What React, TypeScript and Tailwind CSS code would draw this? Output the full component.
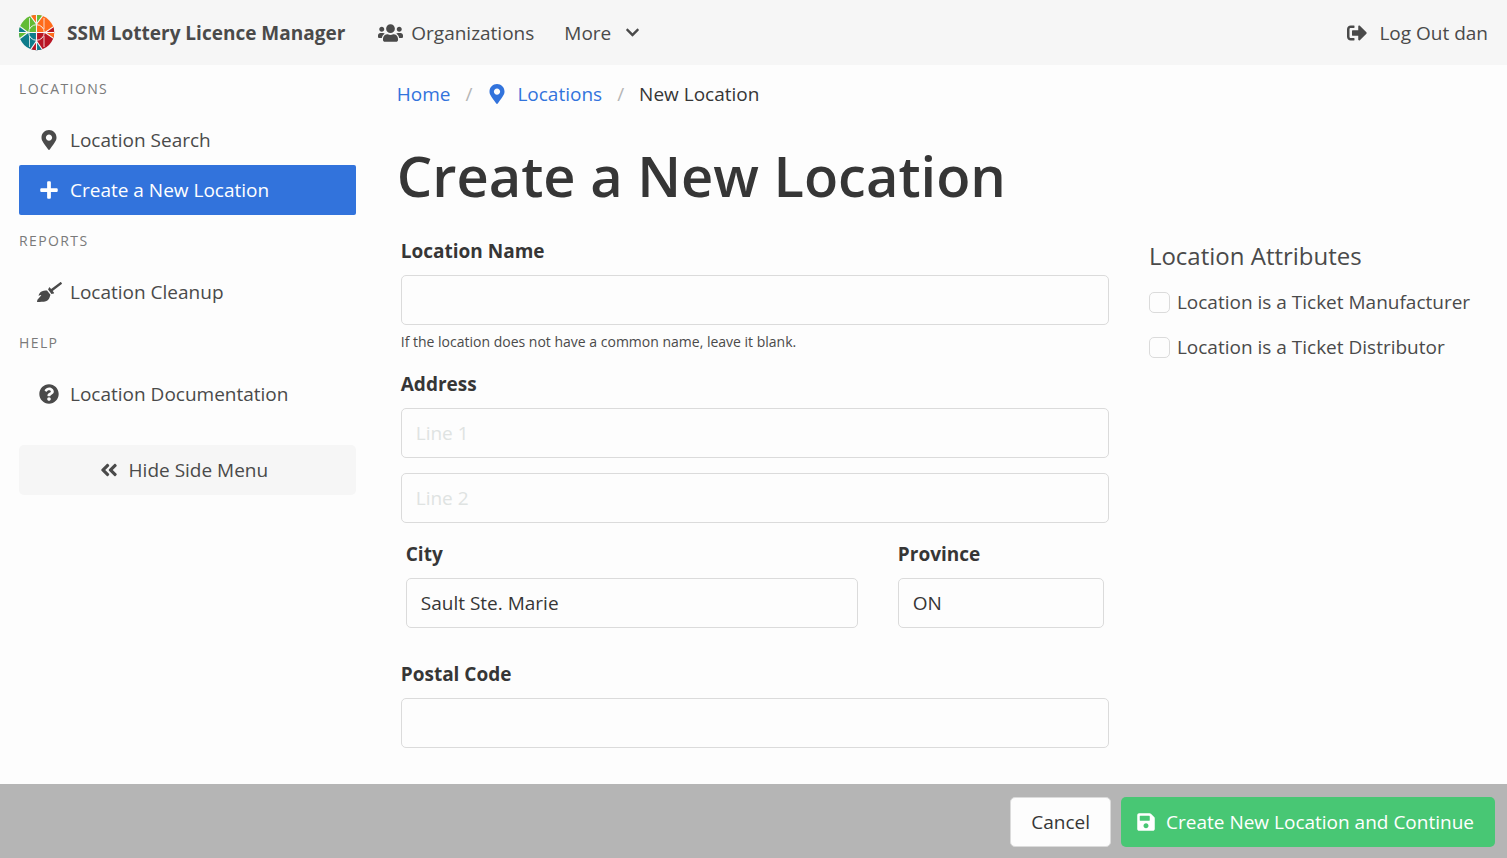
import React, { useState } from "react";
import type { ComponentType, InputHTMLAttributes } from "react";
import {
  FaAngleDoubleLeft,
  FaBroom,
  FaChevronDown,
  FaMapMarkerAlt,
  FaPlus,
  FaQuestionCircle,
  FaSave,
  FaSignOutAlt,
  FaUsers,
} from "react-icons/fa";

type Icon = ComponentType<{ className?: string }>;

function Logo() {
  return (
    <svg viewBox="0 0 36 36" className="size-9 shrink-0" aria-hidden="true">
      <defs>
        <clipPath id="logo-disc">
          <circle cx="17.6" cy="17.6" r="17.6" />
        </clipPath>
      </defs>
      <g clipPath="url(#logo-disc)">
        <rect width="18" height="18" fill="#62bb35" />
        <rect x="18" width="18" height="18" fill="#ff6b1a" />
        <rect y="18" width="18" height="18" fill="#0e7c8b" />
        <rect x="18" y="18" width="18" height="18" fill="#b91524" />
        <path d="M17.5 9 10-1H17.5z" fill="#ff6b1a" />
        <path d="M17.5 9 25-1H17.5z" fill="#62bb35" />
        <path d="M9 17.5-1 10V17.5z" fill="#0e7c8b" />
        <path d="M9 17.5-1 25V17.5z" fill="#62bb35" />
        <path d="M26 17.5 37 10V17.5z" fill="#b91524" />
        <path d="M26 17.5 37 25V17.5z" fill="#ff6b1a" />
        <path d="M17.5 26 10 37H17.5z" fill="#b91524" />
        <path d="M17.5 26 25 37H17.5z" fill="#0e7c8b" />
        <g stroke="#f7f7f7" strokeWidth="1.1" fill="none">
          <path d="M17.5 0v36M0 17.5h36" />
          <path d="M10-1 17.5 9 25-1M10 37 17.5 26 25 37" />
          <path d="M-1 10 9 17.5-1 25M37 10 26 17.5 37 25" />
          <path d="M10.5 3v11M25 3v11M10.5 32V21M25 32V21" strokeWidth="0.8" />
          <circle cx="17.5" cy="17.5" r="7.8" strokeWidth="0.9" />
        </g>
      </g>
    </svg>
  );
}

function MenuSection({ title, children }: { title: string; children: React.ReactNode }) {
  return (
    <section>
      <h2 className="mb-3.5 text-[14px] leading-6 tracking-widest text-[#7a7a7a] uppercase">{title}</h2>
      <ul>{children}</ul>
    </section>
  );
}

function MenuItem({ icon: ItemIcon, iconClass, label, active }: { icon: Icon; iconClass: string; label: string; active?: boolean }) {
  return (
    <li>
      <a
        href="#"
        aria-current={active ? "page" : undefined}
        className={
          active
            ? "flex h-[50px] items-center gap-1.5 rounded-xs bg-[#3273dc] px-[15px] text-white"
            : "flex h-[50px] items-center gap-1.5 rounded-xs px-[15px] text-[#4a4a4a]"
        }
      >
        <span className="flex w-[30px] shrink-0 justify-center">
          <ItemIcon className={iconClass} />
        </span>
        {label}
      </a>
    </li>
  );
}

const inputClass =
  "block h-[50px] w-full rounded-[5px] border border-[#dbdbdb] bg-[#fdfdfd] px-3.5 text-[#363636] placeholder:text-[#dfe3e2]";
const labelClass = "mb-[9px] block font-bold text-[#363636]";

function Field({ id, label, ...props }: { id: string; label: string } & InputHTMLAttributes<HTMLInputElement>) {
  return (
    <div>
      <label htmlFor={id} className={labelClass}>
        {label}
      </label>
      <input id={id} type="text" className={inputClass} {...props} />
    </div>
  );
}

function Check({ id, label }: { id: string; label: string }) {
  return (
    <div className="flex items-center gap-[7px]">
      <input
        id={id}
        type="checkbox"
        className="size-[21px] shrink-0 appearance-none rounded-[5px] border border-[#dbdbdb] checked:bg-[#3273dc]"
      />
      <label htmlFor={id} className="whitespace-nowrap">
        {label}
      </label>
    </div>
  );
}

export default function App() {
  const [menuOpen, setMenuOpen] = useState(true);

  return (
    <div className="flex min-h-screen flex-col bg-[#fdfdfd] font-['Open_Sans','Noto_Sans',sans-serif] text-[19px] leading-[30px] text-[#4a4a4a]">
      <header className="flex h-[65px] items-center bg-[#f6f6f6] px-[19px]">
        <a href="#" className="flex items-center gap-3 font-bold whitespace-nowrap">
          <Logo />
          <span>SSM Lottery Licence Manager</span>
        </a>
        <nav className="ml-[33px] flex items-center gap-[30px]">
          <a href="#" className="flex items-center gap-2">
            <FaUsers className="h-5 w-[25px]" />
            Organizations
          </a>
          <button type="button" className="flex items-center gap-3.5">
            More
            <FaChevronDown className="size-[15px]" />
          </button>
        </nav>
        <a href="#" className="ml-auto flex items-center gap-3 whitespace-nowrap">
          <FaSignOutAlt className="size-5" />
          Log Out dan
        </a>
      </header>

      <div className="flex flex-1">
        {menuOpen && (
          <aside className="w-1/4 shrink-0 pt-3 pr-[21px] pl-[19px]">
            <nav className="flex flex-col gap-3.5" aria-label="Locations">
              <MenuSection title="Locations">
                <MenuItem icon={FaMapMarkerAlt} iconClass="size-5" label="Location Search" />
                <MenuItem icon={FaPlus} iconClass="size-5" label="Create a New Location" active />
              </MenuSection>
              <MenuSection title="Reports">
                <MenuItem icon={FaBroom} iconClass="h-5 w-[25px]" label="Location Cleanup" />
              </MenuSection>
              <MenuSection title="Help">
                <MenuItem icon={FaQuestionCircle} iconClass="size-5" label="Location Documentation" />
              </MenuSection>
            </nav>
            <button
              type="button"
              onClick={() => setMenuOpen(false)}
              className="mt-[26px] flex h-[50px] w-full items-center justify-center gap-2.5 rounded-[5px] bg-[#f6f6f6] pr-2"
            >
              <FaAngleDoubleLeft className="size-5" />
              Hide Side Menu
            </button>
          </aside>
        )}

        <main className="min-w-0 flex-1 px-5 pt-3.5 pb-9">
          <nav aria-label="Breadcrumb">
            <ol className="flex items-center gap-[15px]">
              <li>
                <a href="#" className="text-[#3273dc]">
                  Home
                </a>
              </li>
              <li className="text-[#b5b5b5]">/</li>
              <li>
                <a href="#" className="flex items-center gap-2.5 text-[#3273dc]">
                  <FaMapMarkerAlt className="size-5" />
                  Locations
                </a>
              </li>
              <li className="text-[#b5b5b5]">/</li>
              <li className="text-[#363636]" aria-current="page">
                New Location
              </li>
            </ol>
          </nav>

          <h1 className="mt-8 text-[56px] leading-[68px] font-semibold text-[#363636]">Create a New Location</h1>

          <form id="location-form" className="mt-[27px] grid grid-cols-[minmax(0,708fr)_minmax(0,338fr)] gap-10 pl-1">
            <div>
              <Field id="location-name" label="Location Name" />
              <p className="mt-[5px] text-[14px] leading-6">If the location does not have a common name, leave it blank.</p>

              <div className="mt-[15px] flex flex-col gap-[15px]">
                <Field id="address-1" label="Address" placeholder="Line 1" />
                <input type="text" aria-label="Address line 2" placeholder="Line 2" className={inputClass} />
              </div>

              <div className="mt-4 grid grid-cols-[minmax(0,452fr)_minmax(0,206fr)] gap-10 px-[5px]">
                <Field id="city" label="City" defaultValue="Sault Ste. Marie" />
                <Field id="province" label="Province" defaultValue="ON" />
              </div>

              <div className="mt-[31px]">
                <Field id="postal-code" label="Postal Code" />
              </div>
            </div>

            <fieldset className="flex flex-col gap-[15px]">
              <legend className="pt-[5px] pb-4 text-[24px] leading-[30px]">Location Attributes</legend>
              <Check id="manufacturer" label="Location is a Ticket Manufacturer" />
              <Check id="distributor" label="Location is a Ticket Distributor" />
            </fieldset>
          </form>
        </main>
      </div>

      <footer className="flex justify-end gap-2.5 bg-[#b5b5b5] px-3 pt-[13px] pb-[11px]">
        <button type="button" className="h-[50px] rounded-[5px] border border-[#dbdbdb] bg-[#fdfdfd] px-5 text-[#363636]">
          Cancel
        </button>
        <button
          type="submit"
          form="location-form"
          className="flex h-[50px] items-center gap-2.5 rounded-[5px] bg-[#48c774] pr-[21px] pl-[15px] text-white"
        >
          <FaSave className="size-5" />
          Create New Location and Continue
        </button>
      </footer>
    </div>
  );
}
